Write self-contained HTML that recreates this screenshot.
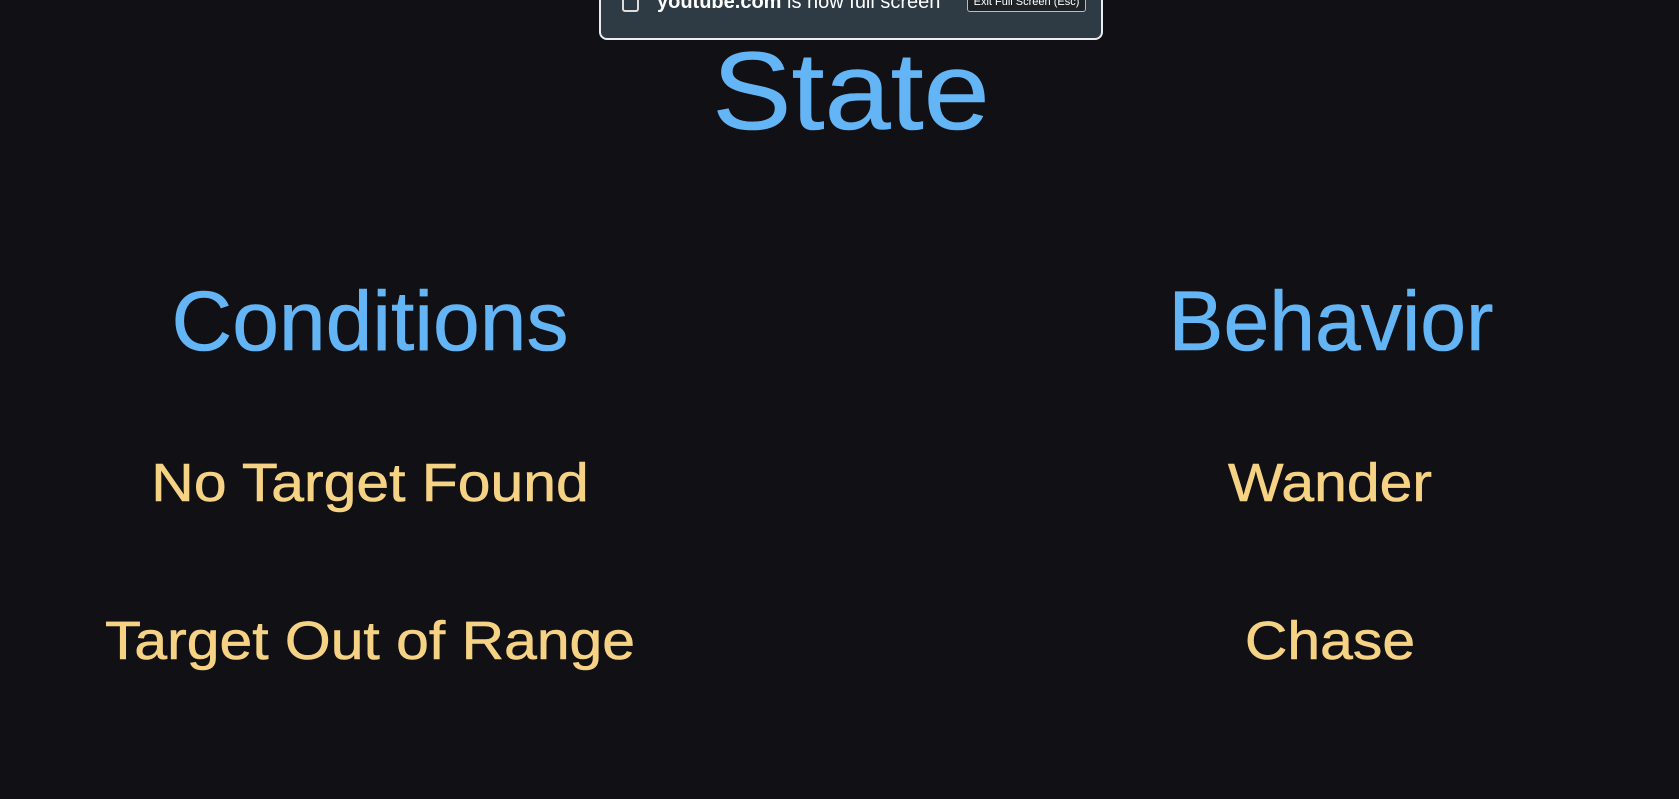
<!DOCTYPE html>
<html><head><style>
html,body{margin:0;padding:0;width:1679px;height:799px;background:#111115;overflow:hidden;font-family:"Liberation Sans",sans-serif}
.t{position:absolute;line-height:1;white-space:nowrap;-webkit-text-stroke:0.6px currentColor}
.b{color:#64b5f6}.y{color:#f6d384}
.y{transform:translateX(-50%) scaleX(1.09)}
</style></head><body>
<div style="position:absolute;left:599px;top:-10px;width:500px;height:46px;background:#2f3b44;border:2px solid #e8eef2;border-radius:8px;color:#fff">
 <div style="position:absolute;left:21px;top:5px;width:13px;height:11px;border:2px solid #ddd;border-radius:3px"></div>
 <div style="position:absolute;left:56px;top:-1px;font-size:20px;line-height:22px;white-space:nowrap"><b>youtube.com</b> is now full screen</div>
 <div style="position:absolute;left:366px;top:4px;width:117px;height:14px;border:1px solid #bbb;border-radius:3px;font-size:11px;line-height:10px;text-align:center;background:#1e2328">Exit Full Screen (Esc)</div>
</div>
<div class="t b" style="left:851px;top:37px;font-size:110px;transform:translateX(-50%) scaleX(1.08)">State</div>
<div class="t b" style="left:370px;top:279px;font-size:84px;transform:translateX(-50%)">Conditions</div>
<div class="t b" style="left:1331px;top:279px;font-size:84px;transform:translateX(-50%) scaleX(0.98)">Behavior</div>
<div class="t y" style="left:370px;top:456px;font-size:54px">No Target Found</div>
<div class="t y" style="left:1330px;top:456px;font-size:54px">Wander</div>
<div class="t y" style="left:370px;top:614px;font-size:54px">Target Out of Range</div>
<div class="t y" style="left:1330px;top:614px;font-size:54px">Chase</div>
</body></html>
